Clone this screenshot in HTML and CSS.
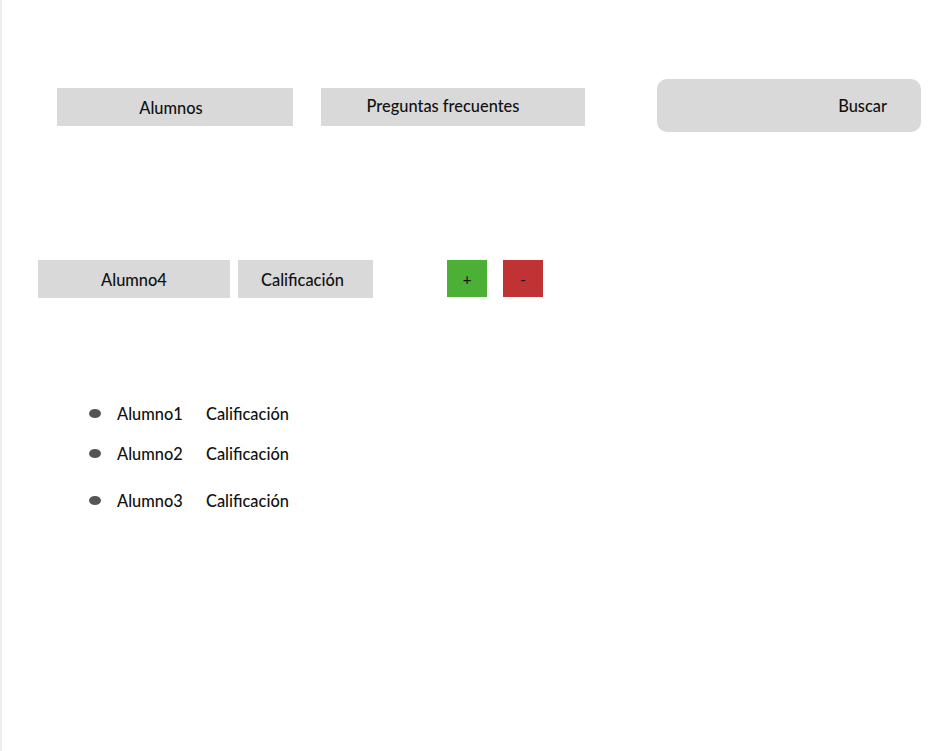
FILE: index.html
```html
<!DOCTYPE html>
<html lang="es">
<head>
<meta charset="utf-8">
<title>Alumnos</title>
<link rel="stylesheet" href="styles.css">
</head>
<body>
<div class="page">
  <nav class="nav">
    <a class="nav-item nav-alumnos">Alumnos</a>
    <a class="nav-item nav-faq">Preguntas frecuentes</a>
    <div class="search">Buscar</div>
  </nav>
  <section class="editor">
    <div class="field field-name">Alumno4</div>
    <div class="field field-grade">Calificación</div>
    <button class="btn btn-add">+</button>
    <button class="btn btn-remove">-</button>
  </section>
  <ul class="list">
    <li class="item"><span class="name">Alumno1</span><span class="grade">Calificación</span></li>
    <li class="item"><span class="name">Alumno2</span><span class="grade">Calificación</span></li>
    <li class="item item-spaced"><span class="name">Alumno3</span><span class="grade">Calificación</span></li>
  </ul>
</div>
</body>
</html>
```
FILE: styles.css
```css
html, body {
  margin: 0;
  padding: 0;
  background: #ffffff;
}
body {
  font-family: "Lato", "Noto Sans", sans-serif;
  font-size: 16.4px;
  font-weight: 500;
  color: #111111;
}
.page {
  box-sizing: border-box;
  height: 751px;
  border-left: 2px solid #ededed;
  padding-top: 79px;
  overflow: hidden;
}
.nav {
  display: flex;
  align-items: flex-start;
  padding-left: 55px;
}
.nav-item {
  box-sizing: border-box;
  height: 38px;
  margin-top: 9px;
  background: #d9d9d9;
  display: flex;
  align-items: center;
  justify-content: center;
  color: #111111;
}
.nav-alumnos {
  width: 236px;
  padding-right: 8px;
}
.nav-faq {
  width: 264px;
  margin-left: 28px;
  padding-right: 20px;
  padding-bottom: 3px;
}
.search {
  box-sizing: border-box;
  width: 264px;
  height: 53px;
  margin-left: 72px;
  background: #d9d9d9;
  border-radius: 10px;
  display: flex;
  align-items: center;
  justify-content: flex-end;
  padding-right: 34px;
}
.editor {
  display: flex;
  align-items: flex-start;
  margin-top: 128px;
  padding-left: 36px;
}
.field {
  box-sizing: border-box;
  height: 38px;
  background: #d9d9d9;
  display: flex;
  align-items: center;
  justify-content: center;
}
.field-name {
  width: 192px;
}
.field-grade {
  width: 135px;
  margin-left: 8px;
  padding-right: 6px;
}
.btn {
  width: 40px;
  height: 37px;
  border: 0;
  padding: 0;
  font-family: inherit;
  font-size: 15px;
  color: #111111;
  display: flex;
  align-items: center;
  justify-content: center;
}
.btn-add {
  margin-left: 74px;
  background: #4caf36;
}
.btn-remove {
  margin-left: 16px;
  background: #c03233;
}
.list {
  list-style: none;
  margin: 105px 0 0 0;
  padding: 0 0 0 87px;
  display: flex;
  flex-direction: column;
  gap: 20px;
}
.item {
  display: flex;
  align-items: center;
  height: 20px;
}
.item::before {
  content: "";
  width: 12px;
  height: 9px;
  border-radius: 50%;
  background: #555555;
  margin-right: 16px;
  margin-top: 1px;
}
.item-spaced {
  margin-top: 7px;
}
.name {
  width: 89px;
}
```
